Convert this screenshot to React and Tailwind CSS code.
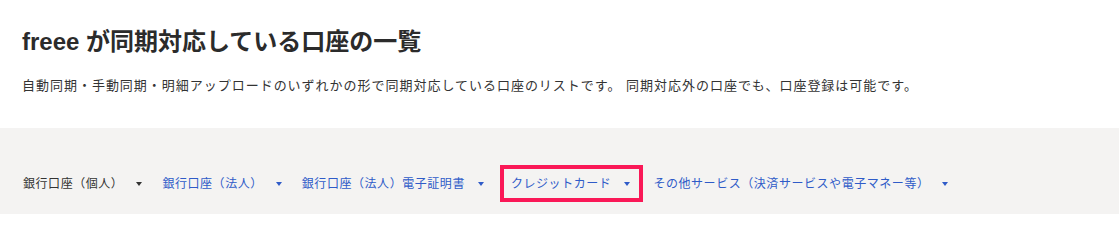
const TABS = [
  { label: '銀行口座（個人）', current: true },
  { label: '銀行口座（法人）' },
  { label: '銀行口座（法人）電子証明書' },
  { label: 'クレジットカード', highlighted: true },
  { label: 'その他サービス（決済サービスや電子マネー等）' },
];

function Caret({ className }) {
  return (
    <svg viewBox="0 0 6 4" className={`w-[6px] h-[4px] ${className}`} fill="currentColor">
      <path d="M0 0h6L3 4z" />
    </svg>
  );
}

export default function App() {
  return (
    <div className="w-[1119px] h-[214px] bg-white overflow-hidden font-['Liberation_Sans','Noto_Sans_CJK_JP',sans-serif] text-[#333]">
      <div className="px-[22px] pt-[28px] h-[128px]">
        <h1 className="text-[24px] leading-[28px] font-bold text-[#2b2b2b]">
          freee が同期対応している口座の一覧
        </h1>
        <p className="mt-[22px] text-[13px] leading-[16px] tracking-[0.98px] text-[#333]">
          自動同期・手動同期・明細アップロードのいずれかの形で同期対応している口座のリストです。 同期対応外の口座でも、口座登録は可能です。
        </p>
      </div>

      <div className="bg-[#f4f3f2] h-[86px] pt-[37px]">
        <ul className="flex items-center gap-[20px] pl-[23px]">
          {TABS.map((tab) => (
            <li
              key={tab.label}
              className={`flex items-center h-[37px] ${
                tab.highlighted
                  ? 'border-4 border-[#fa1857] -ml-[4px] -mr-[10px] pl-[7px] pr-[9px]'
                  : ''
              }`}
            >
              <span
                className={`text-[12px] leading-[16px] tracking-[0.55px] ${
                  tab.current ? 'text-[#333]' : 'text-[#2f5bc8]'
                }`}
              >
                {tab.label}
              </span>
              <Caret className={`ml-[13px] ${tab.current ? 'text-[#333]' : 'text-[#2f5bc8]'}`} />
            </li>
          ))}
        </ul>
      </div>
    </div>
  );
}
